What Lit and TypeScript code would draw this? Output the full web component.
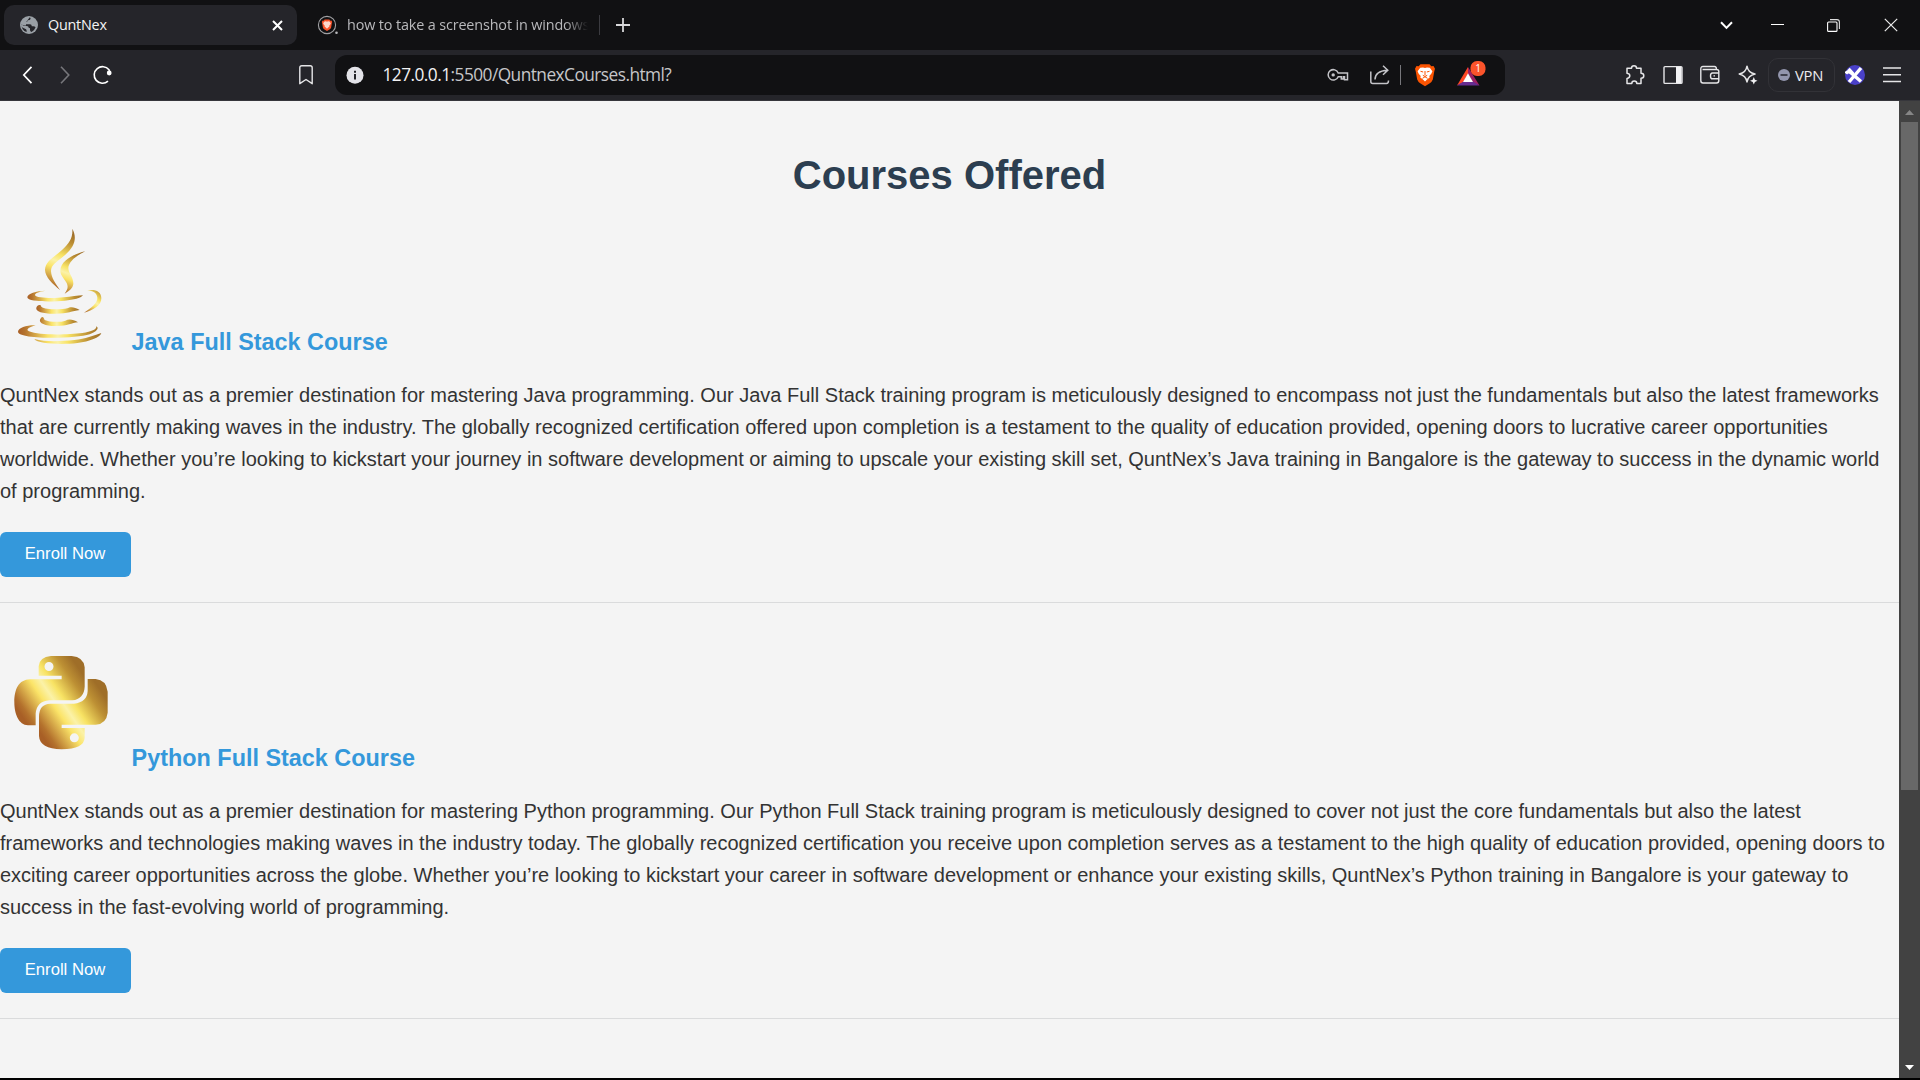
import { LitElement, html, css, svg } from "lit";
import { customElement, property } from "lit/decorators.js";

interface Course {
  logo: "java" | "python";
  title: string;
  lines: string[];
}

const COURSES: Course[] = [
  {
    logo: "java",
    title: "Java Full Stack Course",
    lines: [
      "QuntNex stands out as a premier destination for mastering Java programming. Our Java Full Stack training program is meticulously designed to encompass not just the fundamentals but also the latest frameworks",
      "that are currently making waves in the industry. The globally recognized certification offered upon completion is a testament to the quality of education provided, opening doors to lucrative career opportunities",
      "worldwide. Whether you’re looking to kickstart your journey in software development or aiming to upscale your existing skill set, QuntNex’s Java training in Bangalore is the gateway to success in the dynamic world",
      "of programming.",
    ],
  },
  {
    logo: "python",
    title: "Python Full Stack Course",
    lines: [
      "QuntNex stands out as a premier destination for mastering Python programming. Our Python Full Stack training program is meticulously designed to cover not just the core fundamentals but also the latest",
      "frameworks and technologies making waves in the industry today. The globally recognized certification you receive upon completion serves as a testament to the high quality of education provided, opening doors to",
      "exciting career opportunities across the globe. Whether you’re looking to kickstart your career in software development or enhance your existing skills, QuntNex’s Python training in Bangalore is your gateway to",
      "success in the fast-evolving world of programming.",
    ],
  },
];

const goldStops = svg`
  <stop offset="0" stop-color="#a85f26"/>
  <stop offset=".08" stop-color="#b4722d"/>
  <stop offset=".36" stop-color="#fbe468"/>
  <stop offset=".48" stop-color="#fbf2a8"/>
  <stop offset=".6" stop-color="#f8e364"/>
  <stop offset=".84" stop-color="#bd9034"/>
  <stop offset="1" stop-color="#9f6e28"/>`;

const javaLogo = html`<svg width="125" height="125" viewBox="0 42 375 375">
  <defs>
    <linearGradient id="s1" gradientUnits="userSpaceOnUse" x1="160" y1="240" x2="225" y2="75">${goldStops}</linearGradient>
    <linearGradient id="s2" gradientUnits="userSpaceOnUse" x1="190" y1="258" x2="240" y2="125">${goldStops}</linearGradient>
    <linearGradient id="c1" gradientUnits="userSpaceOnUse" x1="82" y1="0" x2="250" y2="0">${goldStops}</linearGradient>
    <linearGradient id="c2" gradientUnits="userSpaceOnUse" x1="108" y1="0" x2="238" y2="0">${goldStops}</linearGradient>
    <linearGradient id="c3" gradientUnits="userSpaceOnUse" x1="54" y1="0" x2="304" y2="0">${goldStops}</linearGradient>
    <linearGradient id="c4" gradientUnits="userSpaceOnUse" x1="252" y1="310" x2="312" y2="232">${goldStops}</linearGradient>
  </defs>
  <path fill="url(#s1)" d="M217 56 C231 82 226 108 196 134 C168 157 153 164 153 184 C154 205 168 222 180 240 C158 222 136 202 135 180 C136 154 160 143 186 120 C208 100 219 84 217 56 Z"/>
  <path fill="url(#s2)" d="M256 124 C229 137 205 155 205 175 C206 192 221 203 220 222 C218 236 206 244 194 251 C202 239 206 231 200 219 C193 205 181 197 181 182 C182 151 222 132 256 124 Z"/>
  <path fill="url(#c1)" d="M137 242 C115 245 104 250 105 256 C108 264 160 266 191 262 C214 260 233 257 249 256 C242 265 222 269 194 272 C155 276 82 276 82 262 C83 250 108 243 137 242 Z"/>
  <path fill="url(#c2)" d="M118 285 C121 284 123 286 124 290 C137 300 183 299 202 295 C210 290 222 289 239 300 C216 303 205 311 166 311 C133 312 105 305 109 293 C111 288 114 286 118 285 Z"/>
  <path fill="url(#c2)" d="M127 321 C131 321 132 326 134 330 C149 337 183 337 196 332 C207 326 219 328 234 337 C215 339 203 348 170 348 C138 349 116 339 120 329 C122 325 124 322 127 321 Z"/>
  <path fill="url(#c3)" d="M107 346 C88 352 75 359 87 364 C119 377 205 374 247 369 C275 365 290 359 289 349 C299 354 289 366 269 373 C222 388 54 388 54 365 C55 353 81 345 107 346 Z"/>
  <path fill="url(#c3)" d="M103 387 C140 397 188 393 223 390 C257 387 280 377 304 369 C300 383 269 394 232 399 C184 405 112 401 103 387 Z"/>
  <path fill="url(#c4)" d="M262 242 C281 236 304 243 304 264 C305 287 278 301 252 308 C272 295 293 279 292 263 C291 247 278 242 262 242 Z"/>
</svg>`;

const pythonLogo = html`<svg width="125" height="125" viewBox="0 0 375 375">
  <defs>
    <linearGradient id="pa" gradientUnits="userSpaceOnUse" x1="55" y1="212" x2="238" y2="88">${goldStops}</linearGradient>
    <linearGradient id="pb" gradientUnits="userSpaceOnUse" x1="128" y1="289" x2="311" y2="165">${goldStops}</linearGradient>
  </defs>
  <path fill="url(#pa)" d="M116 107 V79 Q118 51 153 48 H215 Q251 51 254 82 V140 Q252 177 217 181 H148 Q110 184 107 221 V256 H84 C56 255 43 222 43 187 C43 148 56 119 90 118 H185 V107 Z M147 66 A13.500 13.500 0 1 0 147 93 A13.500 13.500 0 1 0 147 66 Z" fill-rule="evenodd"/>
  <path fill="url(#pb)" d="M263 117 H287 Q319 120 323 155 V218 Q319 252 287 254 H185 V264 H254 V293 Q253 326 185 328 Q119 326 117 288 V229 Q118 192 151 191 H222 Q261 187 263 153 Z M223 280 A13.500 13.500 0 1 0 223 307 A13.500 13.500 0 1 0 223 280 Z" fill-rule="evenodd"/>
</svg>`;

const bravePath = "M5.500 1.200 H14.500 L16.300 3.200 L18.500 2.900 L20 5.800 L19.300 8.200 L17.800 16.600 Q17 18.900 14.800 20.300 L10 23.300 L5.200 20.300 Q3 18.900 2.200 16.600 L.700 8.200 L0 5.800 L1.500 2.900 L3.700 3.200 Z";
const lionPath = "M5.200 4.800 L8 4.500 L10 5.100 L12 4.500 L14.800 4.800 L17.400 8.200 L16.300 10.800 L14.300 12.900 L14.700 14.500 L12.300 16.300 L10 18.600 L7.700 16.300 L5.300 14.500 L5.700 12.900 L3.700 10.800 L2.600 8.200 Z";

@customElement("tab-strip")
class TabStrip extends LitElement {
  static styles = css`
    :host { display: flex; height: 50px; background: #111113; align-items: center; font-family: "Open Sans", sans-serif; font-size: 14.400px; color: #f4f4f5; }
    svg { display: block; flex: none; }
    .tab { box-sizing: border-box; display: flex; align-items: center; height: 40px; border-radius: 10px; }
    .active { width: 293px; margin-left: 4px; padding: 0 14px 0 15px; background: #25252a; }
    .active .name { margin-left: 9px; flex: 1; letter-spacing: -.25px; }
    .idle { width: 301px; padding-left: 20px; }
    .idle .name { margin-left: 8px; width: 248px; flex: none; white-space: nowrap; letter-spacing: -.14px; color: #b9b9bc; -webkit-mask-image: linear-gradient(90deg, #000 218px, transparent 241px); mask-image: linear-gradient(90deg, #000 218px, transparent 241px); }
    .name { line-height: 20px; }
    .split { width: 1px; height: 20px; margin-left: 1px; background: #3b3b40; }
    .plus { margin-left: 16px; }
    .window { display: flex; margin-left: auto; align-items: center; }
    .chevron { margin-right: 38px; }
    .min { margin-right: 43px; }
    .restore { margin-right: 44px; }
    .close { margin-right: 22px; }
  `;
  render() {
    return html`
      <div class="tab active">
        <svg width="20" height="20" viewBox="0 0 20 20"><circle cx="10" cy="10" r="9" fill="#9aa0a6"/><path d="M10.800 2.300 Q12.300 3.200 11.200 4.500 Q10.400 5.300 9 5.100 Q8.600 6.900 7 7.200 V9.300 H11 Q12.800 9.300 12.800 11.300 H14.300 Q15.800 11.300 16.600 12.300 Q15.500 15.500 12.600 16.900 Q11 16.500 11 15 V13.300 Q9.300 13.200 9.200 11.600 Q9 11 7.500 11 H4.500 L2.900 9.300 Q2.400 10.800 3 12.300 L5.500 13.500 Q7.600 13.800 7.600 15.500 V17 Q2.200 15.500 2.600 9.300 L4.800 10.600 H7 V7.200 Z" fill="#25252a"/></svg>
        <span class="name">QuntNex</span>
        <svg width="11" height="11" viewBox="0 0 11 11"><path d="M1 1 L10 10 M10 1 L1 10" stroke="#fff" stroke-width="2"/></svg>
      </div>
      <div class="tab idle">
        <svg width="22" height="20" viewBox="0 0 22 20"><circle cx="10" cy="10" r="8.600" fill="none" stroke="#a0a0a3" stroke-width="1.100"/><g transform="translate(4.800 4) scale(.52)"><path d=${bravePath} fill="#fb542b"/><path d=${lionPath} fill="#ffd8cc"/></g><circle cx="19.500" cy="17.700" r="1.300" fill="#b9b9bc"/></svg>
        <span class="name">how to take a screenshot in windows</span>
      </div>
      <div class="split"></div>
      <svg class="plus" width="14" height="14" viewBox="0 0 14 14"><path d="M7 0 V14 M0 7 H14" stroke="#d8d8da" stroke-width="1.800"/></svg>
      <div class="window">
        <svg class="chevron" width="13" height="9" viewBox="0 0 13 9"><path d="M1 1.300 L6.500 6.900 L12 1.300" fill="none" stroke="#fff" stroke-width="2"/></svg>
        <svg class="min" width="13" height="3" viewBox="0 0 13 3"><path d="M0 .500 H13" stroke="#fff"/></svg>
        <svg class="restore" width="13" height="13" viewBox="0 0 13 13"><rect x=".6" y="3" width="9.400" height="9.400" rx="1" fill="none" stroke="#fff" stroke-width="1.100"/><path d="M3 .600 H10 Q12.400 .600 12.400 3 V10" fill="none" stroke="#ddd" stroke-width="1.100"/></svg>
        <svg class="close" width="14" height="14" viewBox="0 0 14 14"><path d="M.800 .800 L13.200 13.200 M13.200 .800 L.800 13.200" stroke="#ececec" stroke-width="1.200"/></svg>
      </div>`;
  }
}

@customElement("nav-bar")
class NavBar extends LitElement {
  static styles = css`
    :host { display: flex; box-sizing: border-box; height: 51px; background: #25252a; border-bottom: 1px solid #36363b; align-items: center; font-family: "Open Sans", sans-serif; }
    svg { display: block; flex: none; fill: none; stroke: #e6e6e8; stroke-width: 1.400; }
    .back { margin-left: 17px; }
    .forward { margin-left: 18px; }
    .reload { margin-left: 16px; }
    .mark { margin-left: 186px; }
    .address { display: flex; box-sizing: border-box; align-items: center; width: 1170px; height: 40px; margin-left: 22px; padding: 0 19px 0 11px; border-radius: 12px; background: #111113; }
    .address svg { stroke: #c4c4c8; }
    .url { margin-left: 18.500px; font-size: 17.300px; line-height: 24px; letter-spacing: -.54px; color: #c6c6c9; white-space: nowrap; }
    .host { color: #f2f2f3; }
    .key { margin-left: auto; }
    .share { margin-left: 21px; }
    .rule { width: 1px; height: 20px; margin: 0 14px 0 10px; background: #77777b; }
    .rewards { margin-left: 21px; }
    .tools { display: flex; align-items: center; margin-left: auto; gap: 17.500px; padding-right: 17px; }
    .vpn { display: flex; box-sizing: border-box; width: 67px; height: 34px; margin: 0 -8px 0 -7px; padding-left: 9px; align-items: center; gap: 5px; border: 1px solid #323237; border-radius: 10px; color: #ececef; font-size: 14.800px; letter-spacing: -.2px; }
    .menu { margin-right: 1px; }
    .badge-text { font-size: 10px; fill: #fff; stroke: none; }
  `;
  render() {
    return html`
      <svg class="back" width="22" height="20" viewBox="0 0 22 20"><path d="M14.500 1.800 L6.800 10 L14.500 18.200" stroke="#fff" stroke-width="1.700"/></svg>
      <svg class="forward" width="20" height="20" viewBox="0 0 20 20"><path d="M4 1.800 L11.800 10 L4 18.200" stroke="#77777b" stroke-width="1.600"/></svg>
      <svg class="reload" width="20" height="20" viewBox="0 0 20 20"><path d="M15 16.200 A8.300 8.300 0 1 1 16 4.800 L17 7.500" stroke="#fff" stroke-width="1.600"/><circle cx="16.200" cy="8" r="2.400" fill="#fff" stroke="none"/></svg>
      <svg class="mark" width="14" height="20" viewBox="0 0 14 20"><path d="M.800 18.700 V2.800 Q.800 .800 2.800 .800 H11.200 Q13.200 .800 13.200 2.800 V18.700 L7 14.500 Z" stroke-linejoin="round"/></svg>
      <div class="address">
        <svg width="18" height="18" viewBox="0 0 18 18"><circle cx="9" cy="9.300" r="8.500" fill="#e3e3e8" stroke="none"/><path d="M9 8 V13.500 M9 4.800 V6.800" stroke="#222226" stroke-width="2"/></svg>
        <span class="url"><span class="host">127.0.0.1</span>:5500/QuntnexCourses.html?</span>
        <svg class="key" width="22" height="14" viewBox="0 0 22 14"><path d="M11.200 5 A5.200 5.200 0 1 0 11.200 8.700 H14.300 V11 H16.300 V8.700 H17.500 V11.700 H20.500 V5 Z" stroke-width="1.500"/><circle cx="6.200" cy="6.900" r="1.700" fill="#c4c4c8" stroke="none"/></svg>
        <svg class="share" width="20" height="20" viewBox="0 0 20 20"><path d="M.800 6.500 V16.500 Q.800 18.500 2.800 18.500 H16.500 Q18.500 18.500 18.500 15.500 M5 14.500 Q5 6 17.500 5.200 M13 .800 L17.800 5.200 L13 9.800" stroke-width="1.500"/></svg>
        <div class="rule"></div>
        <svg width="20" height="24" viewBox="0 0 20 24"><path d=${bravePath} fill="#fb5402" stroke="none"/><path d=${lionPath} fill="#fff" stroke="none"/><path d="M5.500 8.300 L8.200 9 M14.500 8.300 L11.800 9 M10 8 V12.300 M7.800 12.300 L10 13.500 L12.200 12.300 M7.500 15.300 L10 13.800 L12.500 15.300" stroke="#fb5402" stroke-width="1"/></svg>
        <svg class="rewards" width="30" height="31" viewBox="0 0 30 31"><path d="M12 7 L1 25.500 L7 22.500 L12 14 Z" fill="#ff4724" stroke="none"/><path d="M12 7 L23.500 25.500 L17 22.500 L12 14 Z" fill="#9e1f63" stroke="none"/><path d="M1 25.500 H23.500 L17 21.500 H7.500 Z" fill="#662d91" stroke="none"/><path d="M12 13.200 L7 22 H17 Z" fill="#fff" stroke="none"/><rect x="14.500" y="1" width="15" height="15" rx="6.500" fill="#fb542b" stroke="none"/><text class="badge-text" x="22" y="12.200" text-anchor="middle">1</text></svg>
      </div>
      <div class="tools">
        <svg width="20" height="20" viewBox="0 0 20 20"><path d="M2 3.300 H6.500 Q6.500 .800 9 .800 Q11.500 .800 11.500 3.300 H16 V8.300 Q18.800 8.300 18.800 10.800 Q18.800 13.300 16 13.300 V18.500 H11.800 Q11.800 16 9.300 16 Q6.800 16 6.800 18.500 H2 V13.500 Q4.800 13 4.800 10.800 Q4.800 8.700 2 8.300 Z" stroke-width="1.500" stroke-linejoin="round"/></svg>
        <svg width="20" height="20" viewBox="0 0 20 20"><rect x="1" y="1.600" width="18" height="16.800" rx="1"/><path d="M13 2 H18.500 V18 H13 Z" fill="#f2f2f4" stroke="none"/></svg>
        <svg width="20" height="20" viewBox="0 0 20 20"><path d="M.800 4 Q.800 1.500 3 1.500 H14.500 Q16.500 1.500 16.500 4.300 M.800 4 V15.500 Q.800 18 3 18 H16.500 Q18.800 18 18.800 15.500 V6.500 Q18.800 4.500 16.500 4.500 H2.500 M18.800 8 H12.500 Q10.500 8 10.500 10.900 Q10.500 13.800 12.500 13.800 H18.800 M13.500 10.900 H15"/></svg>
        <svg width="20" height="20" viewBox="0 0 20 20"><path d="M9 1.200 Q10 7.800 17 9 Q10 10.500 9 17 Q8 10.500 1.200 9 Q8 7.800 9 1.200 Z" stroke-width="1.500" stroke-linejoin="round"/><path d="M15.800 12 L16.900 14.700 L19.500 15.800 L16.900 16.900 L15.800 19.500 L14.700 16.900 L12 15.800 L14.700 14.700 Z" fill="#f2f2f4" stroke="none"/></svg>
        <div class="vpn"><svg width="12" height="12" viewBox="0 0 12 12"><circle cx="6" cy="6" r="6" fill="#9396ad" stroke="none"/><path d="M2.500 6 H9.500" stroke="#2c2c35" stroke-width="1.600"/></svg>VPN</div>
        <svg width="20" height="20" viewBox="0 0 20 20"><circle cx="10" cy="10" r="10" fill="#4a41c8" stroke="none"/><path d="M.800 8.500 Q3 5.500 6.500 8.200 L16 16.500 M16 3 L4 17 M3.500 4 L8 9" stroke="#fff" stroke-width="3.400"/></svg>
        <svg class="menu" width="20" height="20" viewBox="0 0 20 20"><path d="M1 3 H19 M1 9.800 H19 M1 16.500 H19" stroke-width="1.600"/></svg>
      </div>`;
  }
}

@customElement("course-card")
class CourseCard extends LitElement {
  static styles = css`
    :host { display: block; border-bottom: 1px solid #dadbdc; }
    .head { display: flex; height: 136px; }
    .head svg { display: block; flex: none; margin-right: 6.600px; }
    .title { margin: 0; padding-top: 100px; font-size: 23.400px; line-height: 37.400px; color: #3498db; }
    .text { margin: 18.500px 0 0; font-size: 20px; line-height: 32px; white-space: nowrap; }
    .line { display: block; }
    .enroll { display: block; box-sizing: border-box; width: 131px; height: 45px; margin: 25.500px 0 25px; padding: 0 1px 1px 0; border: 0; border-radius: 6px; background: #3498db; color: #fff; font: 16.670px "Liberation Sans", Arial, sans-serif; }
  `;
  @property({ attribute: false }) course!: Course;
  render() {
    const c = this.course;
    return html`
      <div class="head">${c.logo === "java" ? javaLogo : pythonLogo}<h3 class="title">${c.title}</h3></div>
      <p class="text">${c.lines.map((line) => html`<span class="line">${line}</span>`)}</p>
      <button class="enroll">Enroll Now</button>`;
  }
}

@customElement("app-root")
class AppRoot extends LitElement {
  static styles = css`
    :host { display: flex; flex-direction: column; width: 1920px; height: 1080px; overflow: hidden; background: #000; font-family: "Liberation Sans", Arial, sans-serif; color: #333; }
    .view { display: flex; height: 977px; }
    .page { width: 1899px; background: #f4f4f4; overflow: hidden; }
    .heading { margin: 0; padding-top: 42px; font-size: 40px; line-height: 64px; text-align: center; color: #2c3e50; }
    .courses { display: flex; flex-direction: column; gap: 37px; padding-top: 17px; }
    .scroll { display: flex; flex-direction: column; align-items: center; width: 21px; background: #424242; }
    .scroll svg { display: block; }
    .thumb { width: 17px; height: 668px; background: #686868; }
    .down { margin-top: auto; }
  `;
  render() {
    return html`
      <tab-strip></tab-strip>
      <nav-bar></nav-bar>
      <div class="view">
        <div class="page">
          <h1 class="heading">Courses Offered</h1>
          <div class="courses">${COURSES.map((c) => html`<course-card .course=${c}></course-card>`)}</div>
        </div>
        <div class="scroll">
          <svg width="21" height="21" viewBox="0 0 21 21"><path d="M6 14 L10.500 9 L15 14 Z" fill="#868686"/></svg>
          <div class="thumb"></div>
          <svg class="down" width="21" height="21" viewBox="0 0 21 21"><path d="M6 8 H15 L10.500 13 Z" fill="#fff"/></svg>
        </div>
      </div>`;
  }
}
